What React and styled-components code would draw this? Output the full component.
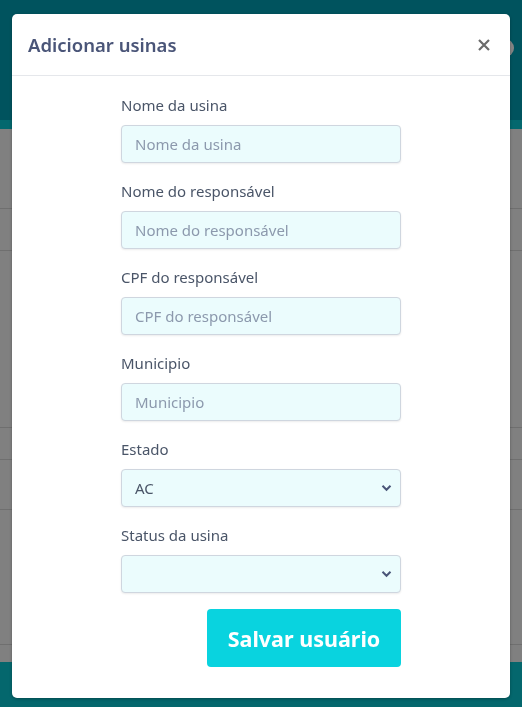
import React from "react";
import styled, { createGlobalStyle } from "styled-components";

const GlobalStyle = createGlobalStyle`
  html, body {
    margin: 0;
    padding: 0;
    height: 100%;
  }
  body {
    font-family: "Noto Sans", "Open Sans", sans-serif;
    background: #808080;
    overflow: hidden;
  }
`;

const Page = styled.div`
  display: flex;
  flex-direction: column;
  height: 707px;
`;

const TopBar = styled.header`
  height: 120px;
  flex-shrink: 0;
  background: #00535e;
  display: flex;
  justify-content: flex-end;
  align-items: flex-start;
  padding: 39px 8px 0 0;
  box-sizing: border-box;
`;

const Avatar = styled.div`
  width: 18px;
  height: 18px;
  border-radius: 50%;
  background: #858585;
`;

const Band = styled.div`
  height: 9px;
  flex-shrink: 0;
  background: #04686e;
`;

const Content = styled.div`
  flex: 1;
  background: #808080;
  display: flex;
  flex-direction: column;
`;

const Row = styled.div`
  height: ${(p) => p.h}px;
  box-sizing: border-box;
  flex-shrink: 0;
  border-bottom: 1px solid #6f6f6f;
`;

const Footer = styled.footer`
  height: 45px;
  flex-shrink: 0;
  background: #04676d;
`;

const Overlay = styled.div`
  position: fixed;
  inset: 0;
  display: flex;
  justify-content: center;
  align-items: flex-start;
  padding-top: 14px;
`;

const Modal = styled.div`
  width: 498px;
  height: 684px;
  background: #ffffff;
  border-radius: 5px;
  box-shadow: 0 1px 3px rgba(0, 0, 0, 0.3);
  display: flex;
  flex-direction: column;
`;

const ModalHeader = styled.div`
  height: 62px;
  flex-shrink: 0;
  box-sizing: border-box;
  border-bottom: 1px solid #e5e7eb;
  display: flex;
  align-items: center;
  justify-content: space-between;
  padding: 0 19px 0 16px;
`;

const Title = styled.h2`
  margin: 0;
  font-size: 18.5px;
  font-weight: 600;
  color: #4a5578;
`;

const CloseButton = styled.button`
  border: none;
  background: none;
  padding: 0;
  width: 14px;
  height: 14px;
  display: flex;
  align-items: center;
  justify-content: center;
  cursor: pointer;
`;

const Form = styled.form`
  width: 280px;
  margin: 0 auto;
  padding-top: 19px;
  display: flex;
  flex-direction: column;
`;

const Field = styled.div`
  display: flex;
  flex-direction: column;
  margin-bottom: 18px;
`;

const Label = styled.label`
  font-size: 15px;
  line-height: 20px;
  color: #4a5568;
  margin-bottom: 10px;
`;

const Input = styled.input`
  height: 38px;
  box-sizing: border-box;
  border: 1px solid #cfd6df;
  border-radius: 4px;
  background: #ebfcfd;
  padding: 0 13px;
  font-family: inherit;
  font-size: 15px;
  color: #4a5568;
  box-shadow: 0 1px 2px rgba(0, 0, 0, 0.08);
  outline: none;
  &::placeholder {
    color: #8c99ad;
  }
`;

const SelectWrap = styled.div`
  position: relative;
  height: 38px;
`;

const Select = styled.select`
  appearance: none;
  width: 100%;
  height: 38px;
  box-sizing: border-box;
  border: 1px solid #cfd6df;
  border-radius: 4px;
  background: #ebfcfd;
  padding: 0 13px;
  font-family: inherit;
  font-size: 15px;
  color: #4a5568;
  box-shadow: 0 1px 2px rgba(0, 0, 0, 0.08);
  outline: none;
`;

const Chevron = styled.svg`
  position: absolute;
  right: 9px;
  top: 15px;
  pointer-events: none;
`;

const Actions = styled.div`
  display: flex;
  justify-content: flex-end;
  margin-top: -2px;
`;

const SaveButton = styled.button`
  width: 194px;
  height: 58px;
  border: none;
  border-radius: 4px;
  background: #09d3df;
  color: #ffffff;
  font-family: inherit;
  font-size: 21.5px;
  font-weight: 700;
  cursor: pointer;
`;

const rows = [80, 42, 177, 32, 50, 135];

const fields = [
  { id: "nome", label: "Nome da usina" },
  { id: "resp", label: "Nome do responsável" },
  { id: "cpf", label: "CPF do responsável" },
  { id: "mun", label: "Municipio" },
];

const ArrowDown = () => (
  <Chevron width="11" height="8" viewBox="0 0 11 8">
    <path d="M1.5 1.8 L5.5 5.8 L9.5 1.8" fill="none" stroke="#4a5578" strokeWidth="2" />
  </Chevron>
);

const App = () => {
  return (
    <>
      <GlobalStyle />
      <Page>
        <TopBar>
          <Avatar />
        </TopBar>
        <Band />
        <Content>
          {rows.map((h, i) => (
            <Row key={i} h={h} />
          ))}
        </Content>
        <Footer />
      </Page>
      <Overlay>
        <Modal>
          <ModalHeader>
            <Title>Adicionar usinas</Title>
            <CloseButton type="button" aria-label="Fechar">
              <svg width="12" height="12" viewBox="0 0 12 12">
                <path d="M1 1 L11 11 M11 1 L1 11" stroke="#6b6b6b" strokeWidth="2.2" />
              </svg>
            </CloseButton>
          </ModalHeader>
          <Form onSubmit={(e) => e.preventDefault()}>
            {fields.map((f) => (
              <Field key={f.id}>
                <Label htmlFor={f.id}>{f.label}</Label>
                <Input id={f.id} placeholder={f.label} />
              </Field>
            ))}
            <Field>
              <Label htmlFor="estado">Estado</Label>
              <SelectWrap>
                <Select id="estado" defaultValue="AC">
                  <option value="AC">AC</option>
                  <option value="AL">AL</option>
                </Select>
                <ArrowDown />
              </SelectWrap>
            </Field>
            <Field>
              <Label htmlFor="status">Status da usina</Label>
              <SelectWrap>
                <Select id="status" defaultValue="">
                  <option value=""></option>
                  <option value="ativa">Ativa</option>
                </Select>
                <ArrowDown />
              </SelectWrap>
            </Field>
            <Actions>
              <SaveButton type="submit">Salvar usuário</SaveButton>
            </Actions>
          </Form>
        </Modal>
      </Overlay>
    </>
  );
};

export default App;
